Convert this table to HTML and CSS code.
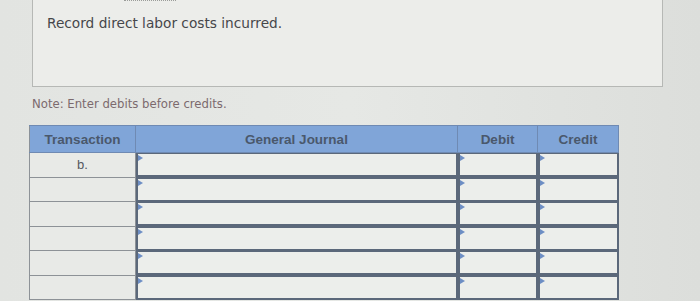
FILE: index.html
```html
<!DOCTYPE html>
<html>
<head>
<meta charset="utf-8">
<link rel="stylesheet" href="styles.css">
</head>
<body>
<div class="page">
  <div class="prompt">
    <div class="dots"></div>
    <p class="prompt-text">Record direct labor costs incurred.</p>
  </div>
  <p class="note">Note: Enter debits before credits.</p>
  <table class="journal">
    <colgroup>
      <col class="c-tx"><col class="c-gj"><col class="c-dr"><col class="c-cr">
    </colgroup>
    <thead>
      <tr><th>Transaction</th><th>General Journal</th><th>Debit</th><th>Credit</th></tr>
    </thead>
    <tbody>
      <tr><td class="tx">b.</td><td class="in"><div class="box"></div></td><td class="in"><div class="box"></div></td><td class="in"><div class="box"></div></td></tr>
      <tr><td class="tx"></td><td class="in"><div class="box"></div></td><td class="in"><div class="box"></div></td><td class="in"><div class="box"></div></td></tr>
      <tr><td class="tx"></td><td class="in"><div class="box"></div></td><td class="in"><div class="box"></div></td><td class="in"><div class="box"></div></td></tr>
      <tr><td class="tx"></td><td class="in"><div class="box"></div></td><td class="in"><div class="box"></div></td><td class="in"><div class="box"></div></td></tr>
      <tr><td class="tx"></td><td class="in"><div class="box"></div></td><td class="in"><div class="box"></div></td><td class="in"><div class="box"></div></td></tr>
      <tr><td class="tx"></td><td class="in"><div class="box"></div></td><td class="in"><div class="box"></div></td><td class="in"><div class="box"></div></td></tr>
    </tbody>
  </table>
</div>
</body>
</html>
```
FILE: styles.css
```css
html, body {
  margin: 0;
  padding: 0;
}
body {
  background: linear-gradient(90deg, #e2e4e1 0%, #e6e8e5 50%, #dcdedb 100%);
  width: 700px;
  height: 301px;
  overflow: hidden;
}
.page {
  display: flex;
  flex-direction: column;
  align-items: flex-start;
}
.prompt {
  margin-left: 32px;
  width: 629px;
  height: 86px;
  background: #ecedea;
  border: 1px solid #b6b8b5;
  border-top: none;
  box-sizing: content-box;
}
.dots {
  margin-left: 91px;
  width: 52px;
  border-top: 1px dotted #9a9c99;
  height: 0;
}
.prompt-text {
  margin: 14px 0 0 14px;
  font-family: "DejaVu Sans", Verdana, sans-serif;
  font-size: 13.7px;
  line-height: 16px;
  color: #46474a;
}
.note {
  margin: 10px 0 0 32px;
  font-family: "DejaVu Sans", Verdana, sans-serif;
  font-size: 11.7px;
  line-height: 14px;
  color: #7c6a6e;
}
.journal {
  margin: 14px 0 0 29px;
  border-collapse: collapse;
  table-layout: fixed;
  width: 589px;
  font-family: "Liberation Sans", Arial, sans-serif;
}
.c-tx { width: 106px; }
.c-gj { width: 322px; }
.c-dr { width: 80px; }
.c-cr { width: 81px; }
.journal th {
  height: 26px;
  padding: 0;
  background: #80a5d8;
  border: 1px solid #6f8ab3;
  color: #4a586c;
  font-size: 13.5px;
  font-weight: bold;
  text-align: center;
}
.journal th:first-child {
  border-left-color: #8a9199;
}
.journal td {
  height: 24.5px;
  padding: 0;
  box-sizing: border-box;
}
.journal td.tx {
  border: 1px solid #8d9297;
  background: #e8eae7;
  color: #55585e;
  font-size: 13px;
  text-align: center;
  vertical-align: middle;
  line-height: 16px;
  padding-bottom: 0;
}
.journal td.in {
  border: 1px solid #5b687a;
  background: #5b687a;
}
.box {
  position: relative;
  height: 21px;
  margin: 1px;
  background: #eceeeb;
  border-left: 1px solid #5b687a;
}
.box::before {
  content: "";
  position: absolute;
  left: 0;
  top: 1px;
  width: 0;
  height: 0;
  border-top: 3px solid transparent;
  border-bottom: 3px solid transparent;
  border-left: 5px solid #6d8ec4;
}
```
